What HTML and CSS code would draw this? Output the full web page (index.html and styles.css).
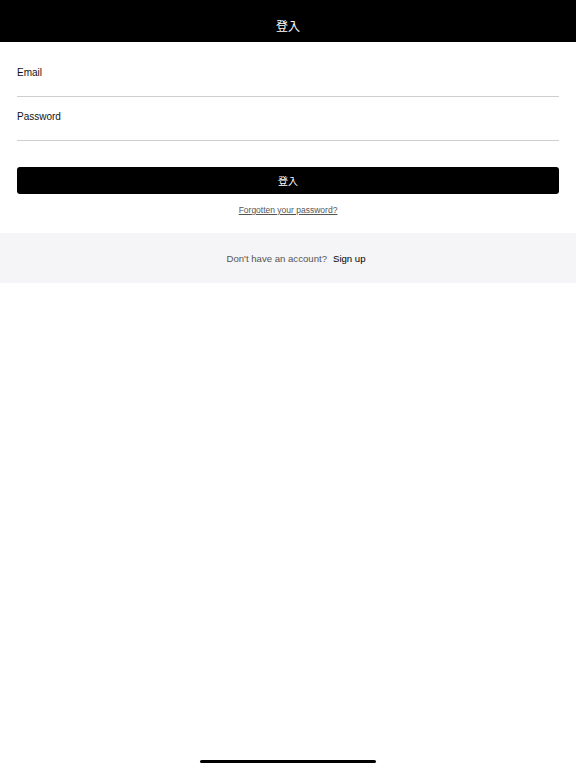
FILE: index.html
```html
<!DOCTYPE html>
<html lang="zh-Hant">
<head>
<meta charset="utf-8">
<title>登入</title>
<link rel="stylesheet" href="styles.css">
</head>
<body>
<div class="page">
  <header class="topbar"><h1 class="title">登入</h1></header>
  <form class="form">
    <label class="field">
      <span class="label">Email</span>
      <input class="input" type="email">
    </label>
    <label class="field field-second">
      <span class="label">Password</span>
      <input class="input" type="password">
    </label>
    <button class="submit" type="button">登入</button>
    <a class="forgot" href="#">Forgotten your password?</a>
  </form>
  <div class="signup">
    <span class="signup-q">Don't have an account?</span>
    <a class="signup-link" href="#">Sign up</a>
  </div>
  <div class="home-indicator"></div>
</div>
</body>
</html>
```
FILE: styles.css
```css
* { box-sizing: border-box; }
html, body { margin: 0; padding: 0; background: #fff; }
body {
  font-family: "Liberation Sans", Arial, "Noto Sans CJK TC", sans-serif;
  color: #000;
}
.page {
  position: relative;
  width: 576px;
  height: 768px;
  overflow: hidden;
}
.topbar {
  height: 42px;
  background: #000;
  display: flex;
  align-items: flex-end;
  justify-content: center;
  padding-bottom: 9px;
}
.title {
  margin: 0;
  font-family: "Noto Sans CJK TC", "Liberation Sans", sans-serif;
  font-weight: 400;
  font-size: 12px;
  line-height: 14px;
  color: #fff;
}
.form {
  display: flex;
  flex-direction: column;
  padding: 25px 17px 0;
}
.field {
  display: flex;
  flex-direction: column;
  border-bottom: 1px solid #cfcfcf;
}
.field-second { margin-top: 14px; }
.label {
  font-size: 10px;
  line-height: 12px;
  color: #111;
}
.input {
  height: 17px;
  border: 0;
  padding: 0;
  outline: none;
  background: transparent;
}
.submit {
  margin-top: 26px;
  height: 27px;
  border: 0;
  border-radius: 3px;
  background: #000;
  color: #fff;
  font-family: "Noto Sans CJK TC", "Liberation Sans", sans-serif;
  font-size: 10px;
  line-height: 12px;
  padding: 0;
}
.forgot {
  align-self: center;
  margin-top: 11px;
  font-size: 8.5px;
  line-height: 11px;
  color: #555;
  text-decoration: underline;
}
.signup {
  margin-top: 17px;
  height: 50px;
  background: #f5f4f6;
  display: flex;
  align-items: center;
  justify-content: center;
  gap: 6px;
  padding-left: 16px;
  padding-top: 1px;
  font-size: 9.6px;
  line-height: 12px;
}
.signup-q { color: #555; }
.signup-link { color: #000; text-decoration: none; }
.home-indicator {
  position: absolute;
  left: 200px;
  bottom: 5px;
  width: 176px;
  height: 3px;
  border-radius: 2px;
  background: #000;
}
```
